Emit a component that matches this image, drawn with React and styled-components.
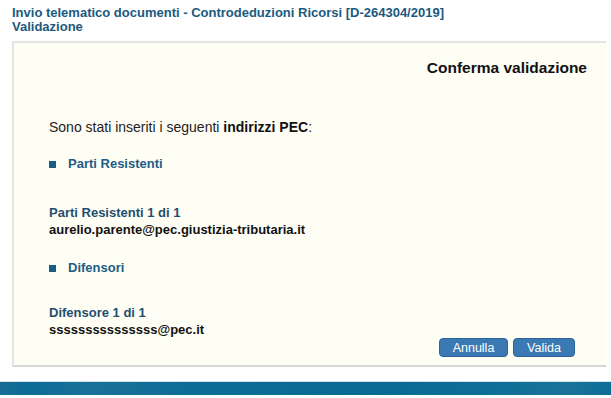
import React from "react";
import styled, { createGlobalStyle } from "styled-components";

const Global = createGlobalStyle`
  html, body { margin: 0; padding: 0; background: #ffffff; }
  body { font-family: "Liberation Sans", Arial, sans-serif; }
`;

const Page = styled.div`
  width: 611px;
  height: 398px;
  display: flex;
  flex-direction: column;
  overflow: hidden;
`;

const Header = styled.div`
  padding: 6px 12px 0 12px;
  height: 41px;
  box-sizing: border-box;
  color: #1b5a7e;
  font-weight: bold;
  font-size: 13px;
  line-height: 14px;
`;

const Panel = styled.div`
  margin: 0 5px 0 12px;
  height: 326px;
  box-sizing: border-box;
  background: #fffef5;
  border: 2px solid #e4e4e0;
  border-bottom: 2px solid #d6d6d2;
  border-right: none;
  display: flex;
  flex-direction: column;
  padding: 0 19px 0 35px;
  position: relative;
`;

const PanelTitle = styled.div`
  text-align: right;
  font-size: 15.5px;
  font-weight: bold;
  color: #111;
  margin-top: 16px;
  line-height: 18px;
`;

const Intro = styled.div`
  margin-top: 42px;
  font-size: 14px;
  color: #222;
  line-height: 16px;
  b { color: #111; }
`;

const SectionHead = styled.div`
  display: flex;
  align-items: center;
  gap: 12px;
  font-size: 13px;
  font-weight: bold;
  color: #1d5d84;
  line-height: 16px;
  margin-top: ${(p) => p.$top}px;
`;

const Bullet = styled.span`
  width: 7px;
  height: 7px;
  background: #145f87;
  display: inline-block;
`;

const ItemLabel = styled.div`
  font-size: 13px;
  font-weight: bold;
  color: #1e4e6f;
  line-height: 17px;
  margin-top: ${(p) => p.$top}px;
`;

const Email = styled.div`
  font-size: 13px;
  font-weight: bold;
  color: #111;
  line-height: 17px;
`;

const Actions = styled.div`
  position: absolute;
  right: 31px;
  bottom: 8px;
  display: flex;
  gap: 5px;
`;

const Button = styled.button`
  width: ${(p) => p.$w}px;
  height: 19px;
  box-sizing: border-box;
  background: #3a79b4;
  border: 1px solid #2c6396;
  border-radius: 4px;
  color: #fff;
  font-family: "Liberation Sans", Arial, sans-serif;
  font-size: 12.5px;
  padding: 0;
  line-height: 16px;
`;

const Footer = styled.div`
  margin-top: 14px;
  height: 13px;
  background: linear-gradient(100deg, #1a6c93 0%, #0b6c95 5%, #1a7098 14%, #0e6d95 30%, #096a93 60%, #0e6e96 80%, #1a7399 93%, #0d6c95 100%);
  border-top: 1px solid #cfe3ec;
`;

export default function App() {
  return (
    <Page>
      <Global />
      <Header>
        <div>Invio telematico documenti - Controdeduzioni Ricorsi [D-264304/2019]</div>
        <div>Validazione</div>
      </Header>
      <Panel>
        <PanelTitle>Conferma validazione</PanelTitle>
        <Intro>
          Sono stati inseriti i seguenti <b>indirizzi PEC</b>:
        </Intro>
        <SectionHead $top={21}>
          <Bullet />
          Parti Resistenti
        </SectionHead>
        <ItemLabel $top={32}>Parti Resistenti 1 di 1</ItemLabel>
        <Email>aurelio.parente@pec.giustizia-tributaria.it</Email>
        <SectionHead $top={22}>
          <Bullet />
          Difensori
        </SectionHead>
        <ItemLabel $top={28}>Difensore 1 di 1</ItemLabel>
        <Email>sssssssssssssss@pec.it</Email>
        <Actions>
          <Button $w={69}>Annulla</Button>
          <Button $w={62}>Valida</Button>
        </Actions>
      </Panel>
      <Footer />
    </Page>
  );
}
